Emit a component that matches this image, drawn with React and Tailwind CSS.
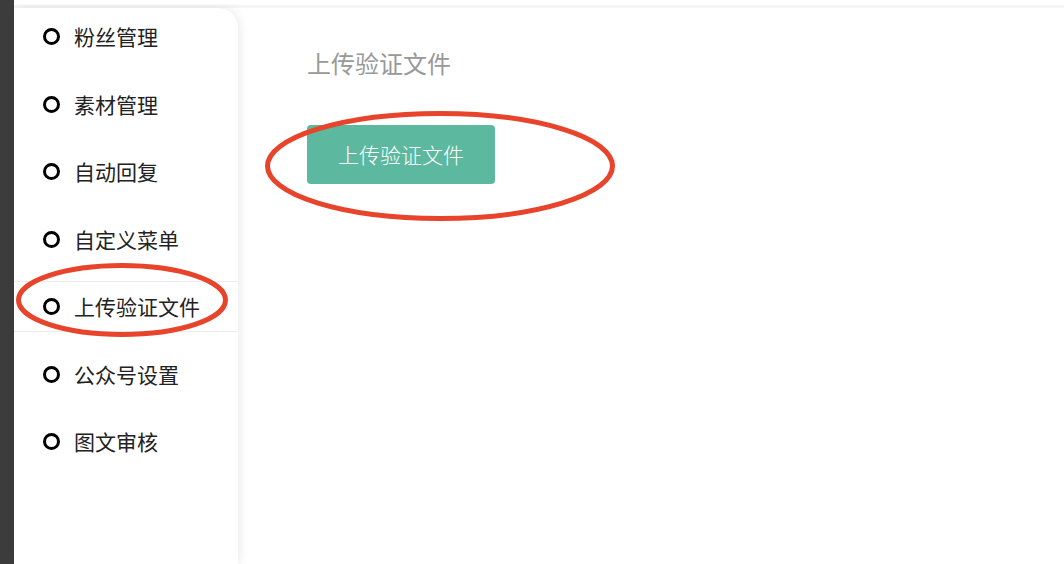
import React from "react";

const items = ["粉丝管理", "素材管理", "自动回复", "自定义菜单", "上传验证文件", "公众号设置", "图文审核"];

export default function App() {
  return (
    <div
      className="relative flex h-[564px] w-[1064px] overflow-hidden bg-white"
      style={{ fontFamily: '"Noto Sans CJK SC", "Noto Sans", sans-serif' }}
    >
      <div className="w-[14px] shrink-0 bg-[#3c3c3c]" />
      <div className="flex flex-1 flex-col">
        <div className="h-[5px] bg-white" />
        <div className="h-[3px] bg-[#f4f4f4]" />
        <div className="flex flex-1">
          <div className="w-[224px] shrink-0 rounded-tr-[20px] bg-white shadow-[3px_0_8px_rgba(0,0,0,0.07)]">
            <div className="flex flex-col gap-[16.5px] pt-[3px]">
              {items.map((t, i) => (
                <div
                  key={t}
                  className={
                    "flex h-[51px] items-center gap-[14px] pl-[29px] " +
                    (i === 4 ? "border-y border-[#ececef]" : "")
                  }
                >
                  <span className="h-[17px] w-[17px] shrink-0 rounded-full border-[3px] border-black" />
                  <span className="text-[21px] leading-none text-[#222]">{t}</span>
                </div>
              ))}
            </div>
          </div>
          <div className="flex-1 pl-[69px] pt-[43px]">
            <div className="text-[24px] leading-none text-[#999]">上传验证文件</div>
            <button className="mt-[50px] flex h-[59px] w-[188px] items-center justify-center rounded-[4px] bg-[#5cb89e] text-[21px] font-light text-white">
              上传验证文件
            </button>
          </div>
        </div>
      </div>
      <svg className="pointer-events-none absolute left-0 top-0" width="1064" height="564">
        <ellipse cx="440" cy="166" rx="172.5" ry="52.5" fill="none" stroke="#e8432b" strokeWidth="5" />
        <ellipse cx="122" cy="300" rx="103.5" ry="34.5" fill="none" stroke="#e8432b" strokeWidth="5" />
      </svg>
    </div>
  );
}
